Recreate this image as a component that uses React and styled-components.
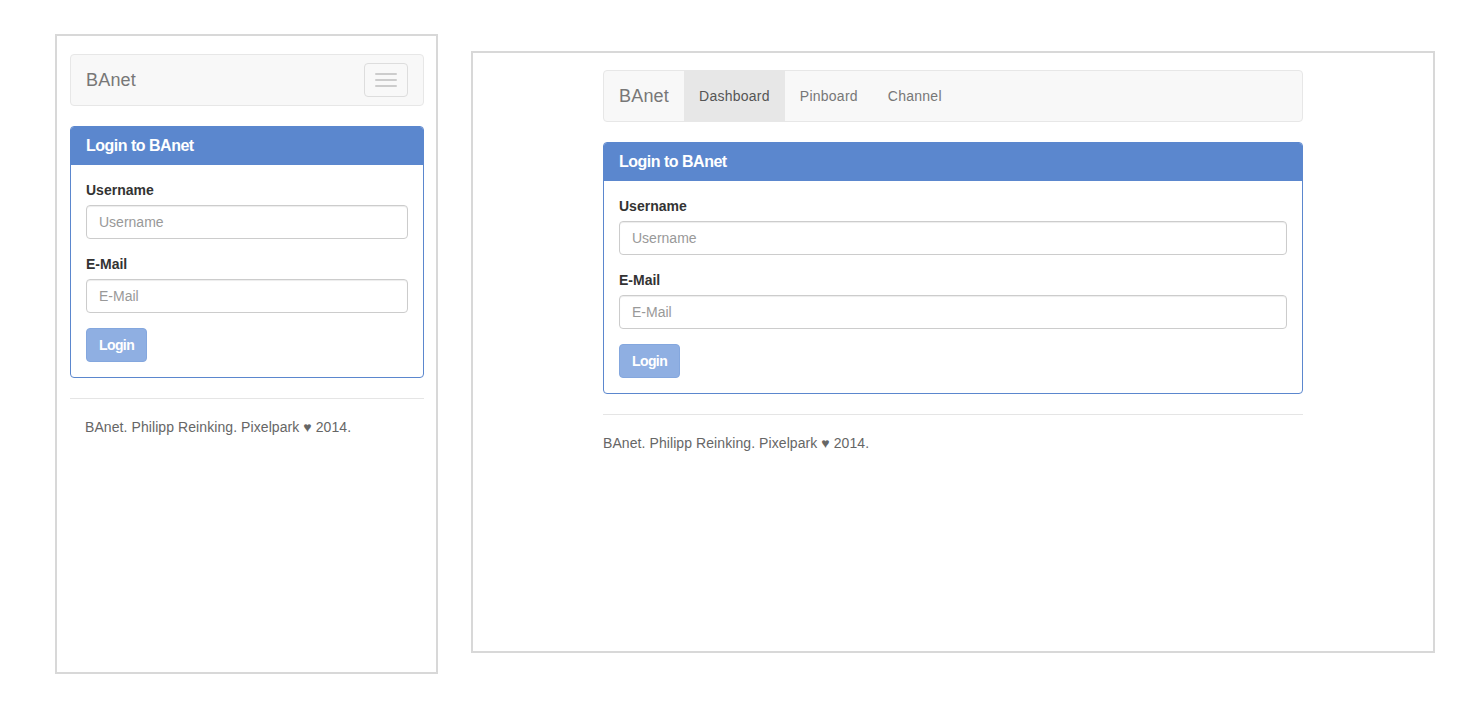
import styled, { createGlobalStyle } from 'styled-components';

const GlobalStyle = createGlobalStyle`
  html, body {
    margin: 0;
    padding: 0;
    background: #fff;
  }
  body {
    font-family: "Liberation Sans", Arial, Helvetica, sans-serif;
    font-size: 14px;
    line-height: 20px;
    color: #333;
  }
  * {
    box-sizing: border-box;
  }
`;

const Stage = styled.div`
  display: flex;
  align-items: flex-start;
  gap: 33px;
  padding: 34px 0 0 55px;
`;

const Frame = styled.div`
  border: 2px solid #d8d8d8;
  width: ${(p) => p.$width}px;
  height: ${(p) => p.$height}px;
  margin-top: ${(p) => p.$offset || 0}px;
  padding: ${(p) => p.$pad};
  background: #fff;
`;

const Container = styled.div`
  width: ${(p) => (p.$width ? `${p.$width}px` : '100%')};
  margin: 0 auto;
`;

const Navbar = styled.nav`
  display: flex;
  align-items: flex-start;
  height: 52px;
  background: #f8f8f8;
  border: 1px solid #e7e7e7;
  border-radius: 4px;
  margin-bottom: 20px;
`;

const Brand = styled.a`
  display: block;
  padding: 15px;
  height: 50px;
  font-size: 18px;
  line-height: 20px;
  letter-spacing: 0.2px;
  color: #777;
  text-decoration: none;
`;

const NavLink = styled.a`
  display: block;
  padding: 15px;
  height: 50px;
  line-height: 20px;
  letter-spacing: 0.25px;
  color: ${(p) => (p.$active ? '#555' : '#777')};
  background: ${(p) => (p.$active ? '#e7e7e7' : 'transparent')};
  text-decoration: none;
`;

const Toggle = styled.button`
  margin: 8px 15px 0 auto;
  width: 44px;
  height: 34px;
  padding: 9px 10px;
  background: transparent;
  border: 1px solid #ddd;
  border-radius: 4px;
  display: flex;
  flex-direction: column;
  justify-content: space-between;
`;

const IconBar = styled.span`
  display: block;
  width: 22px;
  height: 2px;
  border-radius: 1px;
  background: #ccc;
`;

const Panel = styled.div`
  border: 1px solid #5b87ce;
  border-radius: 4px;
  margin-bottom: 20px;
  overflow: hidden;
`;

const PanelHeading = styled.div`
  background: #5b87ce;
  color: #fff;
  padding: 10px 15px;
  height: 38px;
  font-size: 16px;
  font-weight: bold;
  line-height: 18px;
  letter-spacing: -0.5px;
`;

const PanelBody = styled.form`
  padding: 15px;
`;

const FormGroup = styled.div`
  margin-bottom: 15px;
`;

const Label = styled.label`
  display: block;
  font-weight: bold;
  margin-bottom: 5px;
  color: #333;
`;

const Input = styled.input`
  display: block;
  width: 100%;
  height: 34px;
  padding: 6px 12px;
  font-family: inherit;
  font-size: 14px;
  color: #555;
  border: 1px solid #ccc;
  border-radius: 4px;
  box-shadow: inset 0 1px 1px rgba(0, 0, 0, 0.075);
  &::placeholder {
    color: #999;
  }
`;

const SubmitButton = styled.button`
  height: 34px;
  padding: 6px 12px;
  font-family: inherit;
  font-size: 14px;
  font-weight: bold;
  color: #fff;
  background: #8fafe2;
  border: 1px solid #84a7de;
  border-radius: 4px;
  letter-spacing: -0.6px;
`;

const Rule = styled.hr`
  margin: 0;
  border: 0;
  border-top: 1px solid #e5e5e5;
`;

const Footer = styled.p`
  margin: 0;
  padding: 18px ${(p) => (p.$indent ? '15px' : '0')} 0;
  color: #666;
  letter-spacing: 0.08px;
`;

const Nav = ({ compact }) => (
  <Navbar>
    <Brand href="#">BAnet</Brand>
    {compact ? (
      <Toggle type="button" aria-label="Toggle navigation">
        <IconBar />
        <IconBar />
        <IconBar />
      </Toggle>
    ) : (
      <>
        <NavLink href="#" $active>
          Dashboard
        </NavLink>
        <NavLink href="#">Pinboard</NavLink>
        <NavLink href="#">Channel</NavLink>
      </>
    )}
  </Navbar>
);

const LoginPanel = () => (
  <Panel>
    <PanelHeading>Login to BAnet</PanelHeading>
    <PanelBody onSubmit={(e) => e.preventDefault()}>
      <FormGroup>
        <Label>Username</Label>
        <Input type="text" placeholder="Username" />
      </FormGroup>
      <FormGroup>
        <Label>E-Mail</Label>
        <Input type="email" placeholder="E-Mail" />
      </FormGroup>
      <SubmitButton type="submit" disabled>
        Login
      </SubmitButton>
    </PanelBody>
  </Panel>
);

const Page = ({ compact }) => (
  <>
    <Nav compact={compact} />
    <LoginPanel />
    <Rule />
    <Footer $indent={compact}>BAnet. Philipp Reinking. Pixelpark ♥ 2014.</Footer>
  </>
);

const App = () => (
  <>
    <GlobalStyle />
    <Stage>
      <Frame $width={383} $height={640} $pad="18px 12px 0 13px">
        <Page compact />
      </Frame>
      <Frame $width={964} $height={602} $offset={17} $pad="17px 0 0">
        <Container $width={700}>
          <Page />
        </Container>
      </Frame>
    </Stage>
  </>
);

export default App;
